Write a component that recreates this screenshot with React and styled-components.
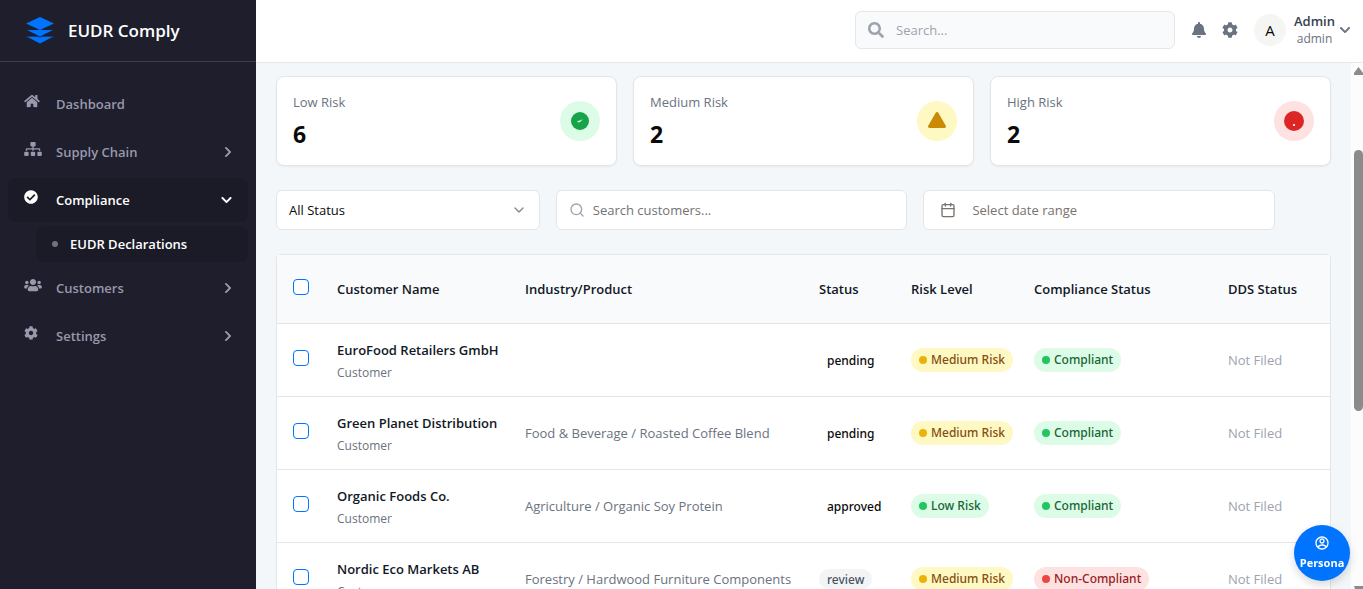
import React from "react";
import styled, { createGlobalStyle } from "styled-components";
import {
  FaHome, FaSitemap, FaCheckCircle, FaUsers, FaCog, FaBell, FaSearch, FaChevronRight, FaChevronDown,
} from "react-icons/fa";
import { RiAccountCircleLine } from "react-icons/ri";
import { Search, Calendar, ChevronDown } from "lucide-react";

const GlobalStyle = createGlobalStyle`
  *, *::before, *::after { box-sizing: border-box; }
  body { margin: 0; font-family: "Open Sans", "Noto Sans", sans-serif; font-size: 13px; line-height: 20px; color: #0a0a0a; background: #f4f7fa; }
  button, input, select { font: inherit; color: inherit; }
  p, h1, ul { margin: 0; padding: 0; }
  ul { list-style: none; }
  a { color: inherit; text-decoration: none; }
`;

const Shell = styled.div`
  display: flex;
  height: 100vh;
  overflow: hidden;
`;

const Sidebar = styled.aside`
  flex: 0 0 256px;
  background: #1e1e2d;
  color: #9899ac;
`;

const Brand = styled.div`
  display: flex;
  align-items: center;
  gap: 12px;
  height: 62px;
  padding: 0 24px;
  border-bottom: 1px solid #374151;
  color: #ffffff;
  font-size: 17px;
  font-weight: 600;
`;

const NavList = styled.ul`
  display: flex;
  flex-direction: column;
  gap: 4px;
  padding: 20px 8px;
`;

const NavLink = styled.a`
  display: flex;
  align-items: center;
  height: 44px;
  padding: 0 16px;
  border-radius: 8px;
  font-weight: 600;
  color: ${(p) => (p.$active ? "#ffffff" : "#9899ac")};
  background: ${(p) => (p.$active ? "#1b1b28" : "transparent")};
`;

const NavIcon = styled.span`
  display: flex;
  width: 32px;
  padding-bottom: 6px;
  svg {
    width: ${(p) => p.$w}px;
    height: 14px;
  }
`;

const NavLabel = styled.span`
  flex: 1;
`;

const NavArrow = styled.span`
  display: flex;
  svg {
    width: ${(p) => p.$w}px;
    height: 12px;
  }
`;

const SubLink = styled.a`
  display: flex;
  align-items: center;
  gap: 12px;
  height: 36px;
  margin: 4px 0 0 28px;
  padding: 0 16px;
  border-radius: 8px;
  background: #1b1b28;
  color: #ffffff;
  font-weight: 600;
`;

const SubDot = styled.span`
  width: 6px;
  height: 6px;
  border-radius: 50%;
  background: #6b7280;
`;

const Page = styled.div`
  flex: 1;
  min-width: 0;
  display: flex;
  flex-direction: column;
`;

const TopBar = styled.header`
  display: flex;
  flex: 0 0 63px;
  align-items: center;
  justify-content: flex-end;
  padding: 0 12px 3px 24px;
  background: #ffffff;
  border-bottom: 1px solid #e5e7eb;
`;

const GlobalSearch = styled.label`
  display: flex;
  align-items: center;
  gap: 12px;
  width: 320px;
  height: 38px;
  margin-right: 8px;
  padding: 0 12px;
  background: #f9fafb;
  border: 1px solid #e5e7eb;
  border-radius: 6px;
  color: #9ca3af;
`;

const BareInput = styled.input`
  flex: 1;
  min-width: 0;
  padding: 0;
  border: 0;
  outline: 0;
  background: transparent;
  &::placeholder { color: ${(p) => p.$hint}; opacity: 1; }
`;

const IconButton = styled.button`
  display: flex;
  padding: 8px;
  border: 0;
  background: transparent;
  color: #6b7280;
  margin-right: -1px;
`;

const Profile = styled.button`
  display: flex;
  align-items: center;
  gap: 4px;
  margin-left: 9px;
  padding: 0;
  border: 0;
  background: transparent;
  color: #6b7280;
`;

const Avatar = styled.span`
  display: grid;
  place-items: center;
  width: 32px;
  height: 32px;
  margin-right: 4px;
  border-radius: 50%;
  background: #f5f5f4;
  color: #0a0a0a;
  font-size: 15px;
`;

const ProfileText = styled.span`
  display: flex;
  flex-direction: column;
  align-items: center;
  font-size: 12px;
  line-height: 18px;
`;

const ProfileName = styled.span`
  font-size: 13px;
  line-height: 18px;
  font-weight: 600;
  color: #374151;
`;

const Viewport = styled.div`
  flex: 1;
  min-height: 0;
  display: flex;
  overflow: hidden;
`;

const Content = styled.main`
  flex: 1;
  min-width: 0;
  display: flex;
  flex-direction: column;
  gap: 24px;
  padding: 13px 20px 0;
`;

const ScrollRail = styled.div`
  flex: 0 0 12px;
  display: flex;
  flex-direction: column;
  align-items: flex-end;
  justify-content: space-between;
  padding-top: 4px;
  background: #fcfcfc;
  color: #8b8b8b;
  overflow: hidden;
  svg { display: block; flex: none; }
`;

const ScrollThumb = styled.div`
  width: 9px;
  height: 50%;
  margin-bottom: 100px;
  border-radius: 5px;
  background: #8b8b8b;
`;

const Cards = styled.section`
  display: grid;
  grid-template-columns: repeat(3, 1fr);
  gap: 16px;
`;

const Card = styled.article`
  display: flex;
  align-items: center;
  justify-content: space-between;
  height: 90px;
  padding: 0 16px;
  background: #ffffff;
  border: 1px solid #e5e5e5;
  border-radius: 8px;
  box-shadow: 0 1px 2px rgba(0, 0, 0, 0.05);
`;

const CardLabel = styled.p`
  color: #6b7280;
`;

const CardValue = styled.p`
  margin-top: 6px;
  font-size: 23px;
  line-height: 32px;
  font-weight: 700;
`;

const CardIcon = styled.span`
  display: grid;
  place-items: center;
  width: 40px;
  height: 40px;
  border-radius: 50%;
  background: ${(p) => p.$bg};
`;

const Filters = styled.form`
  display: flex;
  gap: 16px;
`;

const Field = styled.label`
  display: flex;
  align-items: center;
  flex: 0 0 ${(p) => p.$basis};
  gap: 8px;
  height: 40px;
  padding: 0 12px;
  background: #ffffff;
  border: 1px solid #e5e5e5;
  border-radius: 6px;
  svg { flex: none; }
`;

const StatusSelect = styled.select`
  flex: 1;
  min-width: 0;
  padding: 0;
  border: 0;
  outline: 0;
  appearance: none;
  background: transparent;
`;

const DateButton = styled.button`
  display: flex;
  align-items: center;
  flex: 0 0 calc(100% / 3);
  gap: 16px;
  height: 40px;
  padding: 0 16px;
  background: #ffffff;
  border: 1px solid #e5e5e5;
  border-radius: 6px;
  color: #78716c;
`;

const TableCard = styled.section`
  flex: none;
  background: #ffffff;
  border: 1px solid #e5e5e5;
  border-radius: 4px;
`;

const Table = styled.table`
  width: 100%;
  table-layout: fixed;
  border-collapse: collapse;
`;

const Col = styled.col`
  width: ${(p) => p.$w};
`;

const HeadCell = styled.th`
  height: 68px;
  padding: 0 16px;
  background: #f9fafb;
  border-bottom: 1px solid #e5e5e5;
  text-align: left;
  font-weight: 600;
  white-space: nowrap;
  color: #111827;
`;

const Cell = styled.td`
  height: 73px;
  padding: 0 16px;
  border-bottom: 1px solid #e5e5e5;
  white-space: nowrap;
  color: ${(p) => p.$tone || "#6b7280"};
`;

const Tick = styled.input`
  display: block;
  appearance: none;
  width: 16px;
  height: 16px;
  margin: 0 0 4px;
  border: 1px solid #0073ff;
  border-radius: 4px;
  background: #ffffff;
`;

const CustomerName = styled.p`
  padding-top: 4px;
  font-weight: 600;
  color: #111827;
`;

const CustomerKind = styled.p`
  margin-top: 3px;
  font-size: 12px;
`;

const Pill = styled.span`
  display: inline-flex;
  align-items: center;
  gap: 4px;
  height: ${(p) => (p.$plain ? "20px" : "24px")};
  padding: 1px 8px 0;
  border-radius: 12px;
  font-family: "Noto Sans", "Open Sans", sans-serif;
  font-size: 12px;
  font-weight: 500;
  background: ${(p) => p.$bg};
  color: ${(p) => p.$fg};
  vertical-align: middle;
`;

const PillDot = styled.span`
  width: 8px;
  height: 8px;
  border-radius: 50%;
  background: ${(p) => p.$color};
`;

const PersonaButton = styled.button`
  position: fixed;
  right: 13px;
  bottom: 8px;
  display: flex;
  flex-direction: column;
  align-items: center;
  justify-content: center;
  gap: 4px;
  width: 56px;
  height: 56px;
  padding: 0;
  border: 0;
  border-radius: 50%;
  background: #0073ff;
  color: #ffffff;
  font-size: 11px;
  line-height: 16px;
  font-weight: 700;
  box-shadow: 0 4px 8px rgba(0, 0, 0, 0.15);
`;

const LogoMark = () => (
  <svg width="32" height="32" viewBox="0 0 32 32" fill="#0073ff" aria-hidden="true">
    <path d="M16 2 30 8.500 16 15 2 8.500Z" />
    <path d="M3 15h26l-13 6.500Z" />
    <path d="M2 21.300h28L16 28.500Z" />
    <path d="M2 21h28l-2 1H18.500L16 22.700 13.500 22H4Z" fill="#1e1e2d" fillOpacity="0.5" />
  </svg>
);

const LowIcon = () => (
  <svg width="20" height="20" viewBox="0 0 20 20" aria-hidden="true">
    <circle cx="10" cy="10" r="9" fill="#16a34a" />
    <path d="M7 10 9 9.800 13 8.300 10 11 8.500 11.500Z" fill="#dcfce7" />
  </svg>
);

const MediumIcon = () => (
  <svg width="20" height="20" viewBox="0 0 20 20" aria-hidden="true">
    <path d="M8.700 1.800a1.500 1.500 0 0 1 2.600 0l7.500 13a1.500 1.500 0 0 1-1.300 2.200h-15a1.500 1.500 0 0 1-1.300-2.200Z" fill="#ca8a04" />
  </svg>
);

const HighIcon = () => (
  <svg width="20" height="20" viewBox="0 0 20 20" aria-hidden="true">
    <circle cx="10" cy="10" r="10" fill="#dc2626" />
    <rect x="9" y="13" width="2" height="2" fill="#fee2e2" />
  </svg>
);

const tones = {
  green: { bg: "#dcfce7", fg: "#166534", dot: "#22c55e" },
  yellow: { bg: "#fef9c3", fg: "#854d0e", dot: "#eab308" },
  red: { bg: "#fee2e2", fg: "#991b1b", dot: "#ef4444" },
};

const nav = [
  { label: "Dashboard", Icon: FaHome, width: 16 },
  { label: "Supply Chain", Icon: FaSitemap, width: 18, more: true },
  { label: "Compliance", Icon: FaCheckCircle, width: 14, open: true, child: "EUDR Declarations" },
  { label: "Customers", Icon: FaUsers, width: 18, more: true },
  { label: "Settings", Icon: FaCog, width: 14, more: true },
];

const cards = [
  { label: "Low Risk", value: 6, bg: "#dcfce7", Icon: LowIcon },
  { label: "Medium Risk", value: 2, bg: "#fef9c3", Icon: MediumIcon },
  { label: "High Risk", value: 2, bg: "#fee2e2", Icon: HighIcon },
];

const columns = [
  ["Customer Name", "188px"],
  ["Industry/Product", "auto"],
  ["Status", "92px"],
  ["Risk Level", "123px"],
  ["Compliance Status", "194px"],
  ["DDS Status", "118px"],
];

const rows = [
  { name: "EuroFood Retailers GmbH", product: "", status: "pending", risk: "Medium Risk", ok: true },
  { name: "Green Planet Distribution", product: "Food & Beverage / Roasted Coffee Blend", status: "pending", risk: "Medium Risk", ok: true },
  { name: "Organic Foods Co.", product: "Agriculture / Organic Soy Protein", status: "approved", risk: "Low Risk", ok: true },
  { name: "Nordic Eco Markets AB", product: "Forestry / Hardwood Furniture Components", status: "review", risk: "Medium Risk", ok: false },
];

const ToneBadge = ({ tone, children }) => (
  <Pill $bg={tones[tone].bg} $fg={tones[tone].fg}>
    <PillDot $color={tones[tone].dot} />
    {children}
  </Pill>
);

export default function App() {
  return (
    <>
      <GlobalStyle />
      <Shell>
        <Sidebar>
          <Brand>
            <LogoMark />
            EUDR Comply
          </Brand>
          <nav aria-label="Main">
            <NavList>
              {nav.map(({ label, Icon, width, more, open, child }) => (
                <li key={label}>
                  <NavLink href="#" $active={open}>
                    <NavIcon $w={width}><Icon /></NavIcon>
                    <NavLabel>{label}</NavLabel>
                    {more && <NavArrow $w={8}><FaChevronRight /></NavArrow>}
                    {open && <NavArrow $w={11}><FaChevronDown /></NavArrow>}
                  </NavLink>
                  {child && <SubLink href="#"><SubDot />{child}</SubLink>}
                </li>
              ))}
            </NavList>
          </nav>
        </Sidebar>
        <Page>
          <TopBar>
            <GlobalSearch>
              <FaSearch size={16} />
              <BareInput type="search" placeholder="Search..." aria-label="Search" $hint="#9ca3af" />
            </GlobalSearch>
            <IconButton type="button" aria-label="Notifications"><FaBell size={16} /></IconButton>
            <IconButton type="button" aria-label="Settings"><FaCog size={16} /></IconButton>
            <Profile type="button">
              <Avatar>A</Avatar>
              <ProfileText>
                <ProfileName>Admin</ProfileName>
                admin
              </ProfileText>
              <FaChevronDown size={12} />
            </Profile>
          </TopBar>
          <Viewport>
            <Content>
              <Cards>
                {cards.map(({ label, value, bg, Icon }) => (
                  <Card key={label}>
                    <div>
                      <CardLabel>{label}</CardLabel>
                      <CardValue>{value}</CardValue>
                    </div>
                    <CardIcon $bg={bg}><Icon /></CardIcon>
                  </Card>
                ))}
              </Cards>
              <Filters>
                <Field $basis="25%">
                  <StatusSelect aria-label="Status" defaultValue="all">
                    <option value="all">All Status</option>
                  </StatusSelect>
                  <ChevronDown size={16} color="#858585" />
                </Field>
                <Field $basis="calc(100% / 3)">
                  <Search size={16} color="#9ca3af" />
                  <BareInput type="text" placeholder="Search customers..." aria-label="Search customers" $hint="#737373" />
                </Field>
                <DateButton type="button">
                  <Calendar size={16} />
                  Select date range
                </DateButton>
              </Filters>
              <TableCard>
                <Table>
                  <colgroup>
                    <Col $w="44px" />
                    {columns.map(([title, width]) => <Col key={title} $w={width} />)}
                  </colgroup>
                  <thead>
                    <tr>
                      <HeadCell><Tick type="checkbox" aria-label="Select all customers" /></HeadCell>
                      {columns.map(([title]) => <HeadCell key={title} scope="col">{title}</HeadCell>)}
                    </tr>
                  </thead>
                  <tbody>
                    {rows.map((row) => (
                      <tr key={row.name}>
                        <Cell><Tick type="checkbox" aria-label={`Select ${row.name}`} /></Cell>
                        <Cell>
                          <CustomerName>{row.name}</CustomerName>
                          <CustomerKind>Customer</CustomerKind>
                        </Cell>
                        <Cell>{row.product}</Cell>
                        <Cell>
                          <Pill
                            $plain
                            $bg={row.status === "review" ? "#f3f4f6" : "transparent"}
                            $fg={row.status === "review" ? "#4b5563" : "#0a0a0a"}
                          >
                            {row.status}
                          </Pill>
                        </Cell>
                        <Cell><ToneBadge tone={row.risk === "Low Risk" ? "green" : "yellow"}>{row.risk}</ToneBadge></Cell>
                        <Cell><ToneBadge tone={row.ok ? "green" : "red"}>{row.ok ? "Compliant" : "Non-Compliant"}</ToneBadge></Cell>
                        <Cell $tone="#9ca3af">Not Filed</Cell>
                      </tr>
                    ))}
                  </tbody>
                </Table>
              </TableCard>
            </Content>
            <ScrollRail aria-hidden="true">
              <svg width="9" height="8" viewBox="0 0 9 8"><path d="M4.500 0 9 6v2H0V6Z" fill="currentColor" /></svg>
              <ScrollThumb />
              <svg width="9" height="3" viewBox="0 0 9 3"><path d="M0 0h9v3H1Z" fill="currentColor" /></svg>
            </ScrollRail>
          </Viewport>
        </Page>
        <PersonaButton type="button">
          <RiAccountCircleLine size={16} />
          Persona
        </PersonaButton>
      </Shell>
    </>
  );
}
